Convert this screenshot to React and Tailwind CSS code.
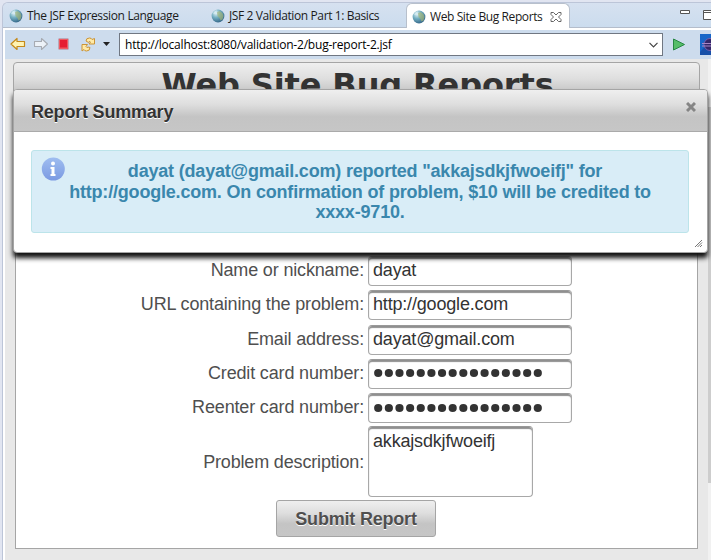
import React from "react";

const metal = "bg-[linear-gradient(#efefef_0%,#dedede_35%,#c4c4c4_65%,#c6c6c6_100%)]";

function Globe() {
  return (
    <svg width="14" height="14" viewBox="0 0 14 14" className="shrink-0">
      <defs>
        <radialGradient id="globe" cx="35%" cy="28%" r="75%">
          <stop offset="0" stopColor="#e3f3f8" />
          <stop offset=".45" stopColor="#76b1c3" />
          <stop offset="1" stopColor="#35688a" />
        </radialGradient>
      </defs>
      <circle cx="7" cy="7" r="6.4" fill="url(#globe)" />
      <path d="M6 3.2 8.5 2l2.8 2 1.2 3-1 3.5-2 1-1-2.5-2-2Z" fill="#a1b474" opacity=".65" />
      <path d="M2 4.5 4 2l2-.7-.5 2L3.5 5Z" fill="#dceff5" opacity=".7" />
    </svg>
  );
}

function Row({ label, children, area }) {
  return (
    <div className={`flex items-center ${area ? "-mt-[1px] mb-[3px]" : "mb-[4.25px]"}`}>
      <label className={`w-[348px] text-right text-[#4f4f4f] tracking-[-0.16px] ${area ? "pt-px" : "pb-px"}`}>{label}</label>
      <div
        className={`ml-[4px] rounded-[4px] border border-[#a8a8a8] border-t-[#999] bg-white text-[#333] pl-[4px] tracking-[-0.18px] shadow-[inset_0_2px_1px_#8f8f8f] ${
          area ? "w-[165px] h-[71px] pt-[4px]" : "w-[204px] h-[30px] flex items-center pb-px"
        }`}
      >
        {children}
      </div>
    </div>
  );
}

function Dots() {
  return (
    <svg width="172" height="10" viewBox="0 0 172 10">
      {Array.from({ length: 16 }, (_, i) => (
        <circle key={i} cx={5.2 + i * 10.64} cy="5" r="4.1" fill="#333" />
      ))}
    </svg>
  );
}

export default function App() {
  return (
    <div className="relative w-[711px] h-[560px] overflow-hidden bg-[#e1e5f1] pt-[2px] pl-[2px] font-['Liberation_Sans',sans-serif]">
      <div className="h-[558px] w-[709px] rounded-tl-[6px] border-l border-t border-[#bcc5d8] overflow-hidden flex flex-col">
        <div className="h-[25px] shrink-0 flex bg-[linear-gradient(#d6e1f0,#cbdcee)] border-b border-[#b4bdcb] text-[12px] text-[#1b1b1b] font-['Open_Sans',sans-serif]">
          <div className="w-[202px] pl-[6px] pt-[2px] flex items-center gap-[4px]">
            <Globe /><span className="whitespace-nowrap tracking-[-0.35px]">The JSF Expression Language</span>
          </div>
          <div className="w-[201px] pl-[6px] pt-[2px] flex items-center gap-[4px]">
            <Globe /><span className="whitespace-nowrap tracking-[-0.38px]">JSF 2 Validation Part 1: Basics</span>
          </div>
          <div className="w-[164px] h-[26px] pl-[5px] flex items-center gap-[4px] bg-white rounded-t-[6px] border-x border-t border-[#b8c0cc]">
            <Globe /><span className="whitespace-nowrap tracking-[-0.4px]">Web Site Bug Reports</span>
            <svg className="ml-auto mr-[7px]" width="12" height="12" viewBox="0 0 12 12" fill="#fff" stroke="#666">
              <path d="M1 1.5h2.5L6 4l2.5-2.5H11v2L8.5 6 11 8.5v2H8.5L6 8l-2.500 2.500H1v-2L3.500 6 1 3.500Z" />
            </svg>
          </div>
          <svg className="ml-auto" width="32" height="24" viewBox="679 3 32 24" fill="#fff" stroke="#555">
            <path d="M680.500 10.500h9v3h-9ZM703.500 10.500h12v9h-12ZM703.500 12.500h12" />
          </svg>
        </div>

        <div className="grow flex flex-col border-l-2 border-t-2 border-white bg-[#cddced] min-h-0">
          <div className="h-[29px] shrink-0 flex items-center">
            <svg width="114" height="29" viewBox="5 30 114 29">
              <path d="M11 44l6-5.500v3h7.500v5H17v3Z" fill="#fff3b2" stroke="#c58a1b" strokeWidth="1.200" strokeLinejoin="round" />
              <path d="M47.500 44l-6-5.500v3h-7v5h7v3Z" fill="#edf2f8" stroke="#a7abb2" strokeWidth="1.100" strokeLinejoin="round" />
              <rect x="58.500" y="38.500" width="10" height="11" rx="1" fill="#ef5b62" stroke="#b9aaba" />
              <rect x="60" y="40" width="7" height="7.500" fill="#e51e32" />
              <g fill="#ffeaa6" stroke="#cb9436" strokeWidth="1" strokeLinejoin="round">
                <path d="M86 41q0-3 3.500-3 2 0 2.500 1.500l2.500-1v5.500h-5.500l1.500-2q-1.500-1.500-2 .5Z" />
                <path d="M90 47.500q0 3.500-3.500 3.500-2 0-2.500-1.500l-2 1.500v-6.500h5.500l-1.500 2q1 2 2 .5Z" />
              </g>
              <path d="M103 42h7l-3.500 4Z" fill="#222" />
            </svg>
            <div className="w-[544px] h-[23px] border border-[#707782] bg-white flex items-center pl-[5px] pr-[4px] text-[12px] text-black font-['Open_Sans',sans-serif]">
              <span className="grow whitespace-nowrap tracking-[-0.21px]">http://localhost:8080/validation-2/bug-report-2.jsf</span>
              <svg width="9" height="6" viewBox="0 0 9 6" fill="none" stroke="#444" strokeWidth="1.200"><path d="M.5.8l4 4 4-4" /></svg>
            </div>
            <svg width="48" height="29" viewBox="663 30 48 29">
              <path d="M673.500 39v11l11-5.500Z" fill="#56bd69" stroke="#278744" strokeLinejoin="round" />
              <rect x="700" y="34" width="20" height="21" fill="#174fa8" />
              <path d="M700 34h11v6l-11 12Z" fill="#1766c8" />
              <circle cx="710" cy="44.500" r="6" fill="#332768" stroke="#7860ae" />
              <path d="M702 43.500h9M702 46h9" stroke="#a786c5" />
            </svg>
          </div>

          <div className="grow flex min-h-0 bg-[#e8e8e8]">
            <main className="w-[703px] pl-[8px] pt-[3px]">
              <h1 className={`w-[687px] h-[48px] rounded-t-[4px] border border-[#a5a5a5] ${metal} pl-[2px] text-center font-['DejaVu_Sans',sans-serif] font-bold text-[32px] leading-[44px] tracking-[-0.12px] text-[#333] whitespace-nowrap`}>
                Web Site Bug Reports
              </h1>
              <form className="ml-[2px] w-[683px] h-[439px] border border-[#a5a5a5] bg-white pt-[145px] text-[18px] leading-[21px]">
                <Row label="Name or nickname:">dayat</Row>
                <Row label="URL containing the problem:">http://google.com</Row>
                <Row label="Email address:">dayat@gmail.com</Row>
                <Row label="Credit card number:"><Dots /></Row>
                <Row label="Reenter card number:"><Dots /></Row>
                <Row label="Problem description:" area>akkajsdkjfwoeifj</Row>
                <button type="button" className={`ml-[260px] block w-[160px] h-[37px] pt-px rounded-[3px] border border-[#a5a5a5] ${metal} font-bold tracking-[-0.2px] text-[#4f4f4f] [text-shadow:0_1px_0_#fff]`}>
                  Submit Report
                </button>
              </form>
            </main>
            <div className="w-[3px] bg-[#f1f1f1] pt-[48px]"><div className="h-[376px] bg-[#cdcdcd]" /></div>
          </div>
        </div>
      </div>

      <section className="absolute left-[13px] top-[89px] w-[695px] h-[164px] rounded-[4px] border border-[#a5a5a5] bg-white shadow-[0_5px_5px_#111]">
        <header className={`h-[42px] rounded-t-[3px] border-b border-[#aaa] ${metal} flex items-center justify-between pl-[17px] pr-[11px] pb-[10px] pt-[12px]`}>
          <h2 className="font-bold text-[18px] leading-[20px] text-[#333] tracking-[-0.2px] [text-shadow:0_1px_0_#fff]">Report Summary</h2>
          <svg className="mb-[9px]" width="10" height="10" viewBox="0 0 10 10" stroke="#858585" strokeWidth="3"><path d="M1 1l8 8M9 1 1 9" /></svg>
        </header>
        <div className="ml-[17px] mt-[18px] w-[658px] h-[83px] rounded-[3px] border border-[#bce4ea] bg-[#d9edf7] flex pl-[9px] pt-[6px]">
          <svg width="24" height="24" viewBox="0 0 24 24" className="shrink-0">
            <defs><linearGradient id="info" x2="0" y2="1"><stop stopColor="#9fbdf0" /><stop offset="1" stopColor="#7b9ae2" /></linearGradient></defs>
            <circle cx="12.3" cy="12" r="11.500" fill="url(#info)" />
            <circle cx="12" cy="6.500" r="2" fill="#fff" />
            <path d="M9.500 10h4v7h1v2h-5v-2h1v-5h-1Z" fill="#fff" />
          </svg>
          <p className="w-[582px] ml-[4px] pt-[4px] text-center text-[18px] leading-[20.500px] font-bold text-[#3a87ad] tracking-[-0.19px] whitespace-nowrap">
            <span className="pl-[10px]">dayat (dayat@gmail.com) reported "akkajsdkjfwoeifj" for</span><br />
            http://google.com. On confirmation of problem, $10 will be credited to<br />xxxx-9710.
          </p>
        </div>
        <svg className="absolute right-[4px] bottom-[4px]" width="9" height="9" viewBox="0 0 9 9" stroke="#777"><path d="M1 8l7-7M3.500 8l4.500-4.500M6 8l2-2" /></svg>
      </section>
    </div>
  );
}
